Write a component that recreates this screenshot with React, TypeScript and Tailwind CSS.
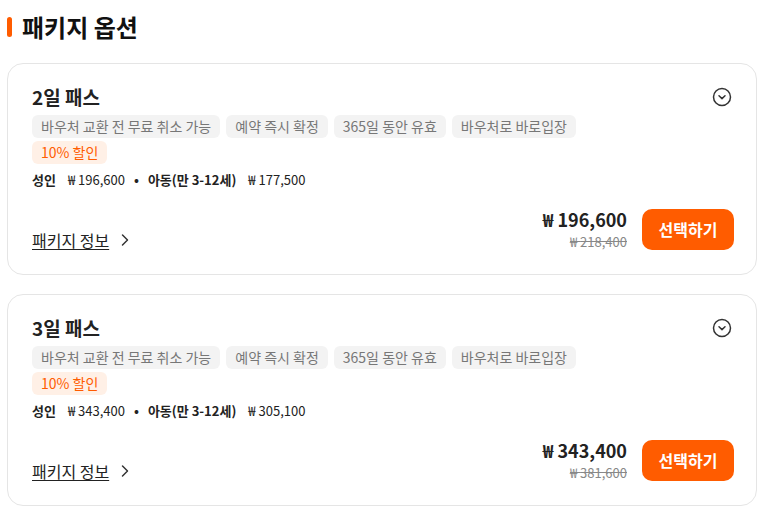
import { ChevronRight } from 'lucide-react';

type Pass = {
  title: string;
  adult: string;
  child: string;
  price: string;
  original: string;
};

const passes: Pass[] = [
  { title: '2일 패스', adult: '196,600', child: '177,500', price: '196,600', original: '218,400' },
  { title: '3일 패스', adult: '343,400', child: '305,100', price: '343,400', original: '381,600' },
];

const tags = ['바우처 교환 전 무료 취소 가능', '예약 즉시 확정', '365일 동안 유효', '바우처로 바로입장'];

function CircleChevron() {
  return (
    <svg className="w-5 h-5 mr-[2px] text-[#333]" viewBox="0 0 20 20" fill="none" stroke="currentColor" strokeWidth={1.5}>
      <circle cx="10" cy="10" r="8.5" />
      <path d="M7 8.8l3 2.8 3-2.8" strokeLinecap="round" strokeLinejoin="round" />
    </svg>
  );
}

function PassCard({ pass }: { pass: Pass }) {
  return (
    <div className="border border-[#e5e5e5] rounded-2xl pl-6 pr-[22px] pt-[19px] pb-6 bg-white">
      <div className="flex items-center justify-between">
        <h3 className="text-[19px] leading-[28px] font-bold text-[#222]">{pass.title}</h3>
        <CircleChevron />
      </div>
      <div className="mt-[4px] flex flex-wrap gap-1.5">
        {tags.map((t) => (
          <span key={t} className="px-[9px] h-[23px] leading-[23px] rounded-md bg-[#f3f3f3] text-[14px] text-[#777]">
            {t}
          </span>
        ))}
      </div>
      <div className="mt-[3px] flex">
        <span className="px-[9px] h-[23px] leading-[23px] rounded-md bg-[#fff0e6] text-[14px] text-[#ff5c00]">
          10% 할인
        </span>
      </div>
      <div className="mt-[6px] flex items-center text-[13px] text-[#222] leading-[20px]">
        <span className="font-bold text-[13px]">성인</span>
        <span className="ml-[12px]">₩ {pass.adult}</span>
        <span className="mx-[9px] font-bold">•</span>
        <span className="font-bold text-[13px]">아동(만 3-12세)</span>
        <span className="ml-[12px]">₩ {pass.child}</span>
      </div>
      <div className="mt-[18px] flex items-end justify-between">
        <a className="flex items-center gap-1.5 text-[16px] leading-[20px] text-[#222] underline underline-offset-2">
          패키지 정보
          <ChevronRight className="w-5 h-5 text-[#333]" strokeWidth={1.75} />
        </a>
        <div className="flex items-center gap-[15px]">
          <div className="flex flex-col items-end">
            <span className="text-[18px] leading-[22px] font-bold text-[#222]">₩ {pass.price}</span>
            <span className="mt-[4px] text-[13px] leading-[16px] text-[#888] line-through">₩ {pass.original}</span>
          </div>
          <button className="w-[92px] h-[41px] rounded-[10px] bg-[#ff5c00] text-white text-[16px] font-bold">
            선택하기
          </button>
        </div>
      </div>
    </div>
  );
}

export default function App() {
  return (
    <main
      className="w-[764px] h-[516px] bg-white px-[7px] pt-[15px] overflow-hidden"
      style={{ fontFamily: '"Noto Sans CJK KR", "Noto Sans", sans-serif' }}
    >
      {/* Header */}
      <div className="flex items-center gap-[10px]">
        <span className="w-[5px] h-[20px] rounded-full bg-[#ff5c00]" />
        <h2 className="text-[24px] leading-[24px] font-bold text-[#111]">패키지 옵션</h2>
      </div>

      {/* Cards */}
      <div className="mt-[24px] flex flex-col gap-[19px]">
        {passes.map((p) => (
          <PassCard key={p.title} pass={p} />
        ))}
      </div>
    </main>
  );
}
